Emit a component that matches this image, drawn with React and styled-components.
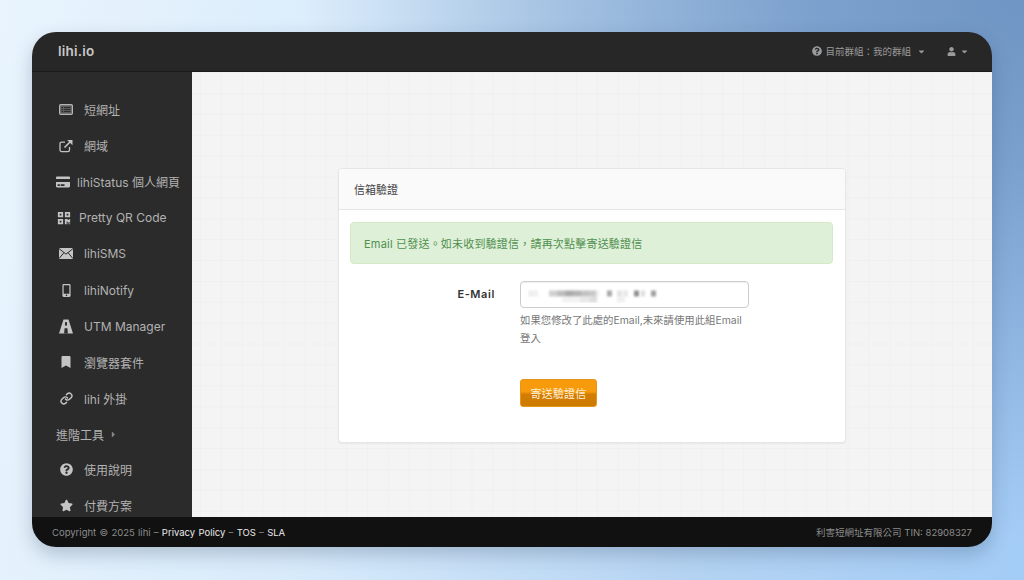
import React from 'react'
import styled, { createGlobalStyle } from 'styled-components'
import { Link as LinkIcon } from 'lucide-react'
import {
  FaCreditCard, FaQrcode, FaMobileAlt, FaBookmark, FaQuestionCircle, FaStar, FaUser, FaCaretDown, FaCaretRight,
} from 'react-icons/fa'

const FONT = `Inter, "Noto Sans CJK TC", sans-serif`

const GlobalStyle = createGlobalStyle`
html, body {
  margin: 0;
  padding: 0;
}
body {
  font-family: ${FONT};
  overflow: hidden;
}
`

const Page = styled.div`
width: 1024px;
height: 580px;
box-sizing: border-box;
padding: 32px 32px 33px;
background:
  radial-gradient(ellipse 720px 540px at 100% 0%, #6f95c4 0%, rgba(111,149,196,0.8) 30%, rgba(111,149,196,0) 100%),
  linear-gradient(100deg, #e9f4fd 0%, #d8ebfb 35%, #b4d3f2 70%, #a3ccf6 100%);
`

const Window = styled.div`
height: 100%;
display: flex;
flex-direction: column;
border-radius: 24px;
overflow: hidden;
box-shadow: 0 8px 18px rgba(40, 60, 90, 0.25);
`

const TopBar = styled.header`
flex: 0 0 40px;
box-sizing: border-box;
display: flex;
align-items: center;
justify-content: space-between;
padding: 0 23px 1px 26px;
background: #272727;
border-bottom: 1px solid #1a1a1a;
`

const Brand = styled.div`
color: #c9c9c9;
font-size: 13.5px;
font-weight: 600;
letter-spacing: 0.2px;
`

const TopMenu = styled.div`
display: flex;
align-items: center;
gap: 21px;
`

const TopItem = styled.div`
display: flex;
align-items: center;
gap: 3px;
color: #9a9a9a;
font-size: 9.5px;
`

const Body = styled.div`
flex: 1;
min-height: 0;
display: flex;
`

const Sidebar = styled.nav`
flex: 0 0 160px;
box-sizing: border-box;
padding-top: 19.5px;
background: #2b2b2b;
overflow: hidden;
`

const NavRow = styled.div`
height: ${p => (p.$heading ? 34 : 36.1)}px;
margin-top: ${p => (p.$heading ? 1 : 0)}px;
box-sizing: border-box;
display: flex;
align-items: center;
padding-left: ${p => p.$indent}px;
gap: ${p => p.$gap}px;
color: #b2b2b2;
font-size: 12px;
white-space: nowrap;
`

const NavIcon = styled.span`
flex: 0 0 14px;
display: flex;
justify-content: center;
color: #c4c4c4;
font-size: ${p => p.$size || 13}px;
`

const Content = styled.main`
flex: 1;
display: flex;
align-items: flex-start;
justify-content: center;
padding-top: 96px;
background-color: #f4f4f4;
background-image:
  linear-gradient(#f0f0f0 1px, transparent 1px),
  linear-gradient(90deg, #f0f0f0 1px, transparent 1px);
background-size: 20.9px 20.9px;
background-position: 8px 0;
`

const Card = styled.section`
width: 508px;
height: 275px;
box-sizing: border-box;
background: #fff;
border: 1px solid #e6e6e6;
border-radius: 4px;
box-shadow: 0 1px 2px rgba(0, 0, 0, 0.05);
`

const CardHeader = styled.div`
height: 41px;
box-sizing: border-box;
display: flex;
align-items: center;
padding-left: 15px;
background: #fafafa;
border-bottom: 1px solid #e6e6e6;
border-radius: 4px 4px 0 0;
color: #444;
font-size: 11px;
`

const CardBody = styled.div`
padding: 12px 12px 0 11px;
`

const Alert = styled.div`
height: 42px;
box-sizing: border-box;
display: flex;
align-items: center;
padding-left: 13px;
background: #dff0d8;
border: 1px solid #d6e9c6;
border-radius: 4px;
color: #4f8f4f;
font-size: 11px;
letter-spacing: 0.2px;
`

const FormRow = styled.div`
display: grid;
grid-template-columns: 145px 229px;
column-gap: 25px;
margin-top: 17px;
`

const Label = styled.label`
justify-self: end;
padding-top: 6px;
color: #333;
font-size: 11px;
font-weight: 600;
letter-spacing: 0.6px;
`

const Field = styled.div`
height: 27px;
box-sizing: border-box;
display: flex;
align-items: center;
padding-left: 7px;
background: #fff;
border: 1px solid #ccc;
border-radius: 4px;
box-shadow: inset 0 1px 1px rgba(0, 0, 0, 0.06);
`

const HelpText = styled.p`
grid-column: 2;
margin: 4px 0 0;
color: #777;
font-size: 10.4px;
line-height: 18px;
`

const SendButton = styled.button`
grid-column: 2;
justify-self: start;
width: 77px;
height: 28px;
margin-top: 31px;
padding: 0;
border: 1px solid #e8951c;
border-radius: 3px;
background: linear-gradient(#f79a0c, #f79a0c 45%, #d37d02 55%, #cc7a00);
color: #fff0d8;
font-family: ${FONT};
font-size: 11px;
letter-spacing: 0.2px;
`

const Footer = styled.footer`
flex: 0 0 30px;
box-sizing: border-box;
display: flex;
align-items: center;
justify-content: space-between;
padding: 0 20px;
background: #111;
color: #8c8c8c;
font-size: 9.5px;
`

const Copyright = styled.span`
word-spacing: 0.6px;
`

const FooterLink = styled.a`
color: #e8e8e8;
`

const ListIcon = () => (
  <svg width="14" height="11" viewBox="0 0 14 11">
    <rect x="0.6" y="0.6" width="12.8" height="9.8" rx="1.2" fill="#5c5c5c" stroke="#b5b5b5" strokeWidth="1.2" />
    <path d="M2.5 3.5h1.5M5 3.5h6.5M2.5 5.5h1.5M5 5.5h6.5M2.5 7.5h1.5M5 7.5h6.5" stroke="#2b2b2b" strokeWidth="1" />
  </svg>
)

const ExternalIcon = () => (
  <svg width="14" height="14" viewBox="0 0 14 14" fill="none" stroke="currentColor" strokeWidth="1.3">
    <path d="M10.5 8v3a1.6 1.6 0 0 1-1.6 1.6H2.6A1.6 1.6 0 0 1 1 11V4.7a1.6 1.6 0 0 1 1.6-1.6H6" />
    <path d="M5.5 8.5L11 3" strokeWidth="1.6" />
    <path d="M8.2 1H13.5V6.3Z" fill="currentColor" stroke="none" />
  </svg>
)

const MailIcon = () => (
  <svg width="14" height="11" viewBox="0 0 14 11">
    <rect width="14" height="11" rx="0.6" fill="currentColor" />
    <path d="M0 0.6L7 6.2L14 0.6M0 10.6L5 4.6M14 10.6L9 4.6" fill="none" stroke="#2b2b2b" strokeWidth="1" />
  </svg>
)

const RoadIcon = () => (
  <svg width="14" height="15" viewBox="0 0 15 15" preserveAspectRatio="none">
    <path d="M4.8 0.5H10.2L15 14.5H0Z" fill="currentColor" />
    <path d="M6.6 3H8.4L8.7 6.5H6.3ZM6 9.2H9L9.5 14.5H5.5Z" fill="#2b2b2b" />
  </svg>
)

const navItems = [
  { icon: <ListIcon />, label: '短網址', indent: 27, gap: 11 },
  { icon: <ExternalIcon />, label: '網域', indent: 27, gap: 11 },
  { icon: <FaCreditCard />, size: 14, label: 'lihiStatus 個人網頁', indent: 24, gap: 7 },
  { icon: <FaQrcode />, size: 14, label: 'Pretty QR Code', indent: 25, gap: 8 },
  { icon: <MailIcon />, label: 'lihiSMS', indent: 27, gap: 11 },
  { icon: <FaMobileAlt />, label: 'lihiNotify', indent: 27, gap: 11 },
  { icon: <RoadIcon />, label: 'UTM Manager', indent: 27, gap: 11 },
  { icon: <FaBookmark />, size: 12, label: '瀏覽器套件', indent: 27, gap: 11 },
  { icon: <LinkIcon size={13} strokeWidth={2.6} />, label: 'lihi 外掛', indent: 27, gap: 11 },
  { label: '進階工具', indent: 24, gap: 5, heading: true },
  { icon: <FaQuestionCircle />, label: '使用說明', indent: 27, gap: 11 },
  { icon: <FaStar />, label: '付費方案', indent: 27, gap: 11 },
]

// the address is pixelated out in the picture: [x, y, width, colour]
const mosaic = [
  [0, 3.5, 6, '#eee'], [6, 3.5, 4, '#f0f0f0'], [21, 3.5, 8, '#d0d0d0'], [29, 3.5, 8, '#bdbdbd'], [37, 3.5, 8, '#aaa'],
  [45, 3.5, 8, '#b3b3b3'], [53, 3.5, 8, '#c2c2c2'], [61, 3.5, 7, '#c8c8c8'], [68, 3.5, 3, '#eee'], [79, 3.5, 5, '#a8a8a8'],
  [89, 3.5, 5, '#e2e2e2'], [95, 3.5, 5, '#e8e8e8'], [106, 3.5, 5, '#8f8f8f'], [113, 3.5, 4, '#ddd'], [123, 3.5, 5, '#a0a0a0'],
  [34, 9.5, 18, '#f2f2f2'], [52, 9.5, 10, '#e8e8e8'], [62, 9.5, 7, '#ddd'], [89, 9.5, 8, '#f0f0f0'],
]

const App = () => (
  <Page lang="zh-TW">
    <GlobalStyle />
    <Window>
      <TopBar>
        <Brand>lihi.io</Brand>
        <TopMenu>
          <TopItem>
            <FaQuestionCircle size={10} />
            <span>目前群組：我的群組</span>
            <FaCaretDown size={9} style={{ marginLeft: 3 }} />
          </TopItem>
          <TopItem>
            <FaUser size={9} />
            <FaCaretDown size={9} style={{ marginLeft: 1 }} />
          </TopItem>
        </TopMenu>
      </TopBar>
      <Body>
        <Sidebar>
          {navItems.map(item => (
            <NavRow key={item.label} $indent={item.indent} $gap={item.gap} $heading={item.heading}>
              {item.icon && <NavIcon $size={item.size}>{item.icon}</NavIcon>}
              <span>{item.label}</span>
              {item.heading && <FaCaretRight size={9} color="#888" />}
            </NavRow>
          ))}
        </Sidebar>
        <Content>
          <Card>
            <CardHeader>信箱驗證</CardHeader>
            <CardBody>
              <Alert>Email 已發送。如未收到驗證信，請再次點擊寄送驗證信</Alert>
              <FormRow>
                <Label>E-Mail</Label>
                <Field>
                  <svg width="140" height="16" viewBox="0 0 140 16">
                    <g style={{ filter: 'blur(0.8px)' }}>
                      {mosaic.map(([x, y, w, fill], i) => (
                        <rect key={i} x={x} y={y} width={w} height="6" fill={fill} />
                      ))}
                    </g>
                  </svg>
                </Field>
                <HelpText>如果您修改了此處的Email,未來請使用此組Email登入</HelpText>
                <SendButton>寄送驗證信</SendButton>
              </FormRow>
            </CardBody>
          </Card>
        </Content>
      </Body>
      <Footer>
        <Copyright>
          Copyright © 2025 lihi – <FooterLink>Privacy Policy</FooterLink> – <FooterLink>TOS</FooterLink> – <FooterLink>SLA</FooterLink>
        </Copyright>
        <span>利害短網址有限公司 TIN: 82908327</span>
      </Footer>
    </Window>
  </Page>
)

export default App
